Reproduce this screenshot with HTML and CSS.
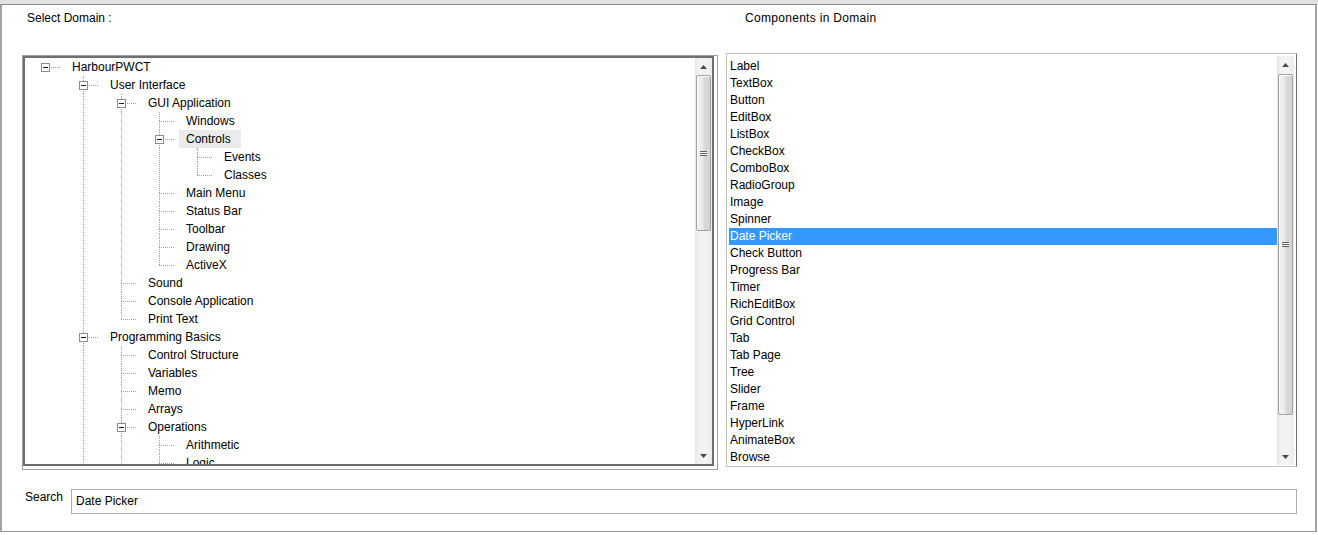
FILE: index.html
```html
<!DOCTYPE html>
<html>
<head>
<meta charset="utf-8">
<title>Select Domain</title>
<link rel="stylesheet" href="styles.css">
</head>
<body>
<div class="topband"></div>
<div class="frame">
  <div class="main">
    <div class="lbl lbl-left">Select Domain :</div>
    <div class="lbl lbl-right">Components in Domain</div>

    <div class="tree">
      <div class="tree-in">
        <div class="tree-view">
          <div class="row"><div class="cn r"><span class="bx"></span></div><span class="t">HarbourPWCT</span></div>
          <div class="row"><div class="ind"></div><div class="cn m"><span class="bx"></span></div><span class="t">User Interface</span></div>
          <div class="row"><div class="ind"></div><div class="ind v"></div><div class="cn m"><span class="bx"></span></div><span class="t">GUI Application</span></div>
          <div class="row"><div class="ind"></div><div class="ind v"></div><div class="ind v"></div><div class="cn m"></div><span class="t">Windows</span></div>
          <div class="row"><div class="ind"></div><div class="ind v"></div><div class="ind v"></div><div class="cn m"><span class="bx"></span></div><span class="t sel">Controls</span></div>
          <div class="row"><div class="ind"></div><div class="ind v"></div><div class="ind v"></div><div class="ind v"></div><div class="cn m"></div><span class="t">Events</span></div>
          <div class="row"><div class="ind"></div><div class="ind v"></div><div class="ind v"></div><div class="ind v"></div><div class="cn"></div><span class="t">Classes</span></div>
          <div class="row"><div class="ind"></div><div class="ind v"></div><div class="ind v"></div><div class="cn m"></div><span class="t">Main Menu</span></div>
          <div class="row"><div class="ind"></div><div class="ind v"></div><div class="ind v"></div><div class="cn m"></div><span class="t">Status Bar</span></div>
          <div class="row"><div class="ind"></div><div class="ind v"></div><div class="ind v"></div><div class="cn m"></div><span class="t">Toolbar</span></div>
          <div class="row"><div class="ind"></div><div class="ind v"></div><div class="ind v"></div><div class="cn m"></div><span class="t">Drawing</span></div>
          <div class="row"><div class="ind"></div><div class="ind v"></div><div class="ind v"></div><div class="cn"></div><span class="t">ActiveX</span></div>
          <div class="row"><div class="ind"></div><div class="ind v"></div><div class="cn m"></div><span class="t">Sound</span></div>
          <div class="row"><div class="ind"></div><div class="ind v"></div><div class="cn m"></div><span class="t">Console Application</span></div>
          <div class="row"><div class="ind"></div><div class="ind v"></div><div class="cn"></div><span class="t">Print Text</span></div>
          <div class="row"><div class="ind"></div><div class="cn m"><span class="bx"></span></div><span class="t">Programming Basics</span></div>
          <div class="row"><div class="ind"></div><div class="ind v"></div><div class="cn m"></div><span class="t">Control Structure</span></div>
          <div class="row"><div class="ind"></div><div class="ind v"></div><div class="cn m"></div><span class="t">Variables</span></div>
          <div class="row"><div class="ind"></div><div class="ind v"></div><div class="cn m"></div><span class="t">Memo</span></div>
          <div class="row"><div class="ind"></div><div class="ind v"></div><div class="cn m"></div><span class="t">Arrays</span></div>
          <div class="row"><div class="ind"></div><div class="ind v"></div><div class="cn m"><span class="bx"></span></div><span class="t">Operations</span></div>
          <div class="row"><div class="ind"></div><div class="ind v"></div><div class="ind v"></div><div class="cn m"></div><span class="t">Arithmetic</span></div>
          <div class="row"><div class="ind"></div><div class="ind v"></div><div class="ind v"></div><div class="cn m"></div><span class="t">Logic</span></div>
        </div>
        <div class="sb">
          <div class="sb-btn"><svg width="7" height="4" viewBox="0 0 7 4"><polygon points="0,4 3.5,0 7,4" fill="#4a4a4a"/></svg></div>
          <div class="sb-track"><div class="thumb thumb-tree"><span class="grip"></span></div></div>
          <div class="sb-btn"><svg width="7" height="4" viewBox="0 0 7 4"><polygon points="0,0 3.5,4 7,0" fill="#4a4a4a"/></svg></div>
        </div>
      </div>
    </div>

    <div class="lst">
      <div class="lst-view">
        <div class="it">Label</div>
        <div class="it">TextBox</div>
        <div class="it">Button</div>
        <div class="it">EditBox</div>
        <div class="it">ListBox</div>
        <div class="it">CheckBox</div>
        <div class="it">ComboBox</div>
        <div class="it">RadioGroup</div>
        <div class="it">Image</div>
        <div class="it">Spinner</div>
        <div class="it it-sel">Date Picker</div>
        <div class="it">Check Button</div>
        <div class="it">Progress Bar</div>
        <div class="it">Timer</div>
        <div class="it">RichEditBox</div>
        <div class="it">Grid Control</div>
        <div class="it">Tab</div>
        <div class="it">Tab Page</div>
        <div class="it">Tree</div>
        <div class="it">Slider</div>
        <div class="it">Frame</div>
        <div class="it">HyperLink</div>
        <div class="it">AnimateBox</div>
        <div class="it">Browse</div>
      </div>
      <div class="sb">
        <div class="sb-btn"><svg width="7" height="4" viewBox="0 0 7 4"><polygon points="0,4 3.5,0 7,4" fill="#4a4a4a"/></svg></div>
        <div class="sb-track"><div class="thumb thumb-list"><span class="grip"></span></div></div>
        <div class="sb-btn"><svg width="7" height="4" viewBox="0 0 7 4"><polygon points="0,0 3.5,4 7,0" fill="#4a4a4a"/></svg></div>
      </div>
    </div>
  </div>

  <div class="search-row">
    <span class="search-lbl">Search</span>
    <div class="search-box">Date Picker</div>
  </div>
</div>
</body>
</html>
```

FILE: styles.css
```css
:root {
  --dot: #a0a0a0;
  --h: repeating-linear-gradient(to right, var(--dot) 0 1px, transparent 1px 2px);
  --vt: repeating-linear-gradient(to bottom, var(--dot) 0 1px, transparent 1px 2px);
}

html, body {
  margin: 0;
  padding: 0;
  background: #ffffff;
}

body {
  width: 1318px;
  height: 535px;
  overflow: hidden;
  font-family: "Liberation Sans", Arial, sans-serif;
  font-size: 12px;
  color: #000;
}

.topband {
  height: 4px;
  background: #e2e2e2;
}

.frame {
  box-sizing: border-box;
  width: 1317px;
  height: 528px;
  border-top: 1px solid #8a8a8a;
  border-left: 2px solid #a3a3a3;
  border-right: 2px solid #a3a3a3;
  border-bottom: 1px solid #9a9a9a;
  background: #fff;
}

.main {
  display: grid;
  grid-template-columns: 696px 571px;
  column-gap: 8px;
  margin-left: 20px;
  align-items: start;
}

.lbl {
  line-height: 14px;
  margin-top: 6px;
  height: 14px;
  margin-bottom: 28px;
  white-space: nowrap;
}

.lbl-left { padding-left: 5px; }
.lbl-right { padding-left: 19px; letter-spacing: 0.3px; }

/* ---------- tree ---------- */
.tree {
  box-sizing: border-box;
  width: 696px;
  height: 415px;
  margin-top: 2px;
  border: 1px solid #a0a0a0;
  padding: 0 3px 3px 0;
}

.tree-in {
  box-sizing: border-box;
  height: 100%;
  border: 2px solid #6f6f6f;
  padding-left: 1px;
  display: flex;
  background: #fff;
}

.tree-view {
  flex: 1;
  overflow: hidden;
}

.row {
  display: flex;
  height: 18px;
}

.ind, .cn {
  flex: none;
  width: 38px;
  height: 18px;
  box-sizing: border-box;
}

.ind.v {
  background-image: var(--vt);
  background-position: 19px 0;
  background-size: 1px 18px;
  background-repeat: no-repeat;
}

.cn {
  background-image: var(--h), var(--vt);
  background-position: 19px 9px, 19px 0;
  background-size: 16px 1px, 1px 9px;
  background-repeat: no-repeat;
}

.cn.m {
  background-image: var(--h), var(--vt), var(--vt);
  background-position: 19px 9px, 19px 0, 19px 9px;
  background-size: 16px 1px, 1px 9px, 1px 9px;
}

.cn.r {
  background-image: var(--h);
  background-position: 19px 9px;
  background-size: 16px 1px;
}

.bx {
  box-sizing: border-box;
  width: 9px;
  height: 9px;
  margin: 5px 0 0 15px;
  border: 1px solid #8d8d8d;
  background: #fff;
  display: flex;
  align-items: center;
  justify-content: center;
}

.bx::before {
  content: "";
  width: 5px;
  height: 1px;
  background: #1a1a1a;
}

.t {
  margin-left: 1px;
  padding: 0 10px 0 7px;
  line-height: 18px;
  height: 18px;
  white-space: nowrap;
}

.t.sel {
  background: #ebebeb;
}

/* ---------- scrollbars ---------- */
.sb {
  flex: none;
  width: 17px;
  display: flex;
  flex-direction: column;
  background: linear-gradient(to right, #e4e4e4 0, #f1f1f1 3px, #f4f4f4 60%, #ececec 100%);
}

.sb-btn {
  height: 17px;
  flex: none;
  display: flex;
  align-items: center;
  justify-content: center;
}

.sb-track {
  flex: 1;
  padding: 0 1px;
}

.thumb {
  box-sizing: border-box;
  border: 1px solid #a2a2a2;
  border-radius: 2px;
  background: linear-gradient(to right, #f3f3f3 0, #e9e9e9 45%, #d9d9d9 55%, #d3d3d3 100%);
  box-shadow: inset 1px 1px 0 #fcfcfc;
  display: flex;
  align-items: center;
  justify-content: center;
}

.thumb-tree {
  height: 156px;
}

.thumb-list {
  margin-top: 1px;
  height: 341px;
}

.grip {
  width: 7px;
  height: 5px;
  background: repeating-linear-gradient(to bottom, #5f5f5f 0 1px, #f6f6f6 1px 2px);
}

/* ---------- list ---------- */
.lst {
  box-sizing: border-box;
  width: 571px;
  height: 414px;
  border: 1px solid #c4c4c4;
  border-right-color: #6f6f6f;
  padding: 2px 2px 1px 2px;
  display: flex;
  background: #fff;
}

.lst-view {
  flex: 1;
  overflow: hidden;
  padding-top: 2px;
}

.it {
  height: 17px;
  line-height: 17px;
  padding-left: 1px;
  white-space: nowrap;
}

.it-sel {
  background: #3399ff;
  color: #fff;
}

/* ---------- search ---------- */
.search-row {
  display: flex;
  align-items: flex-start;
  margin-top: 19px;
  margin-left: 23px;
}

.search-lbl {
  width: 46px;
  line-height: 14px;
  margin-top: 1px;
}

.search-box {
  box-sizing: border-box;
  width: 1226px;
  height: 25px;
  border: 1px solid #adadad;
  padding: 0 4px 2px 4px;
  display: flex;
  align-items: center;
}
```
